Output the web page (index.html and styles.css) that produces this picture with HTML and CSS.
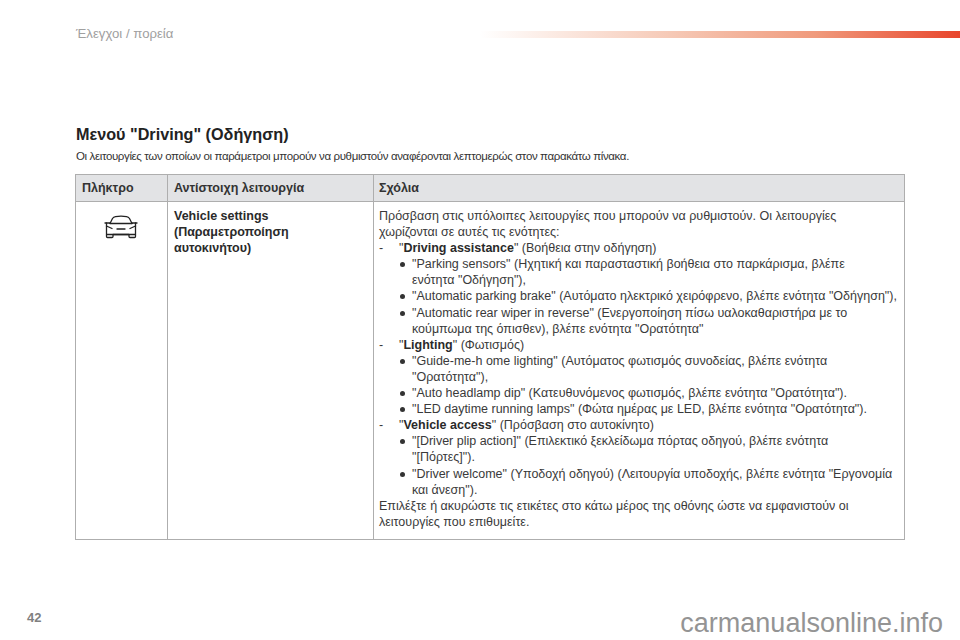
FILE: index.html
```html
<!DOCTYPE html>
<html lang="el">
<head>
<meta charset="utf-8">
<title>Μενού Driving</title>
<link rel="stylesheet" href="styles.css">
</head>
<body>
<div class="page">
  <header class="top">
    <span class="crumb">Έλεγχοι / πορεία</span>
    <span class="bar"></span>
  </header>
  <main class="content">
    <h1 class="title">Μενού "Driving" (Οδήγηση)</h1>
    <p class="intro">Οι λειτουργίες των οποίων οι παράμετροι μπορούν να ρυθμιστούν αναφέρονται λεπτομερώς στον παρακάτω πίνακα.</p>
    <table class="tbl">
      <thead>
        <tr><th class="c1">Πλήκτρο</th><th class="c2">Αντίστοιχη λειτουργία</th><th class="c3">Σχόλια</th></tr>
      </thead>
      <tbody>
        <tr>
          <td class="icon-cell">
            <svg class="car" width="34" height="24" viewBox="0 0 34 24" fill="none" stroke="#222" stroke-width="1.3" stroke-linejoin="round" stroke-linecap="round">
              <path d="M6 8.500 8.500 3.500Q9.500 2 11.500 1.600 17 .8 22.500 1.600Q24.500 2 25.500 3.500L28 8.500"/>
              <path d="M1 8H6.500M27.500 8H33"/>
              <path d="M2.500 8V21.500Q2.500 22.500 3.500 22.500H8Q9 22.500 9 21.500V19.500H25V21.500Q25 22.500 26 22.500H30.500Q31.500 22.500 31.500 21.500V8"/>
              <path d="M2.500 11 8 13.500M31.500 11 26 13.500M6 8.500H28M13 14H21M3 19.500H31"/>
            </svg>
          </td>
          <td class="func"><b>Vehicle settings<br>(Παραμετροποίηση<br>αυτοκινήτου)</b></td>
          <td class="notes">
            <p>Πρόσβαση στις υπόλοιπες λειτουργίες που μπορούν να ρυθμιστούν. Οι λειτουργίες<br>χωρίζονται σε αυτές τις ενότητες:</p>
            <ul class="groups">
              <li>"<b>Driving assistance</b>" (Βοήθεια στην οδήγηση)
                <ul class="items">
                  <li>"Parking sensors" (Ηχητική και παρασταστική βοήθεια στο παρκάρισμα, βλέπε<br>ενότητα "Οδήγηση"),</li>
                  <li>"Automatic parking brake" (Αυτόματο ηλεκτρικό χειρόφρενο, βλέπε ενότητα "Οδήγηση"),</li>
                  <li>"Automatic rear wiper in reverse" (Ενεργοποίηση πίσω υαλοκαθαριστήρα με το<br>κούμπωμα της όπισθεν), βλέπε ενότητα "Ορατότητα"</li>
                </ul>
              </li>
              <li>"<b>Lighting</b>" (Φωτισμός)
                <ul class="items">
                  <li>"Guide-me-h ome lighting" (Αυτόματος φωτισμός συνοδείας, βλέπε ενότητα<br>"Ορατότητα"),</li>
                  <li>"Auto headlamp dip" (Κατευθυνόμενος φωτισμός, βλέπε ενότητα "Ορατότητα").</li>
                  <li>"LED daytime running lamps" (Φώτα ημέρας με LED, βλέπε ενότητα "Ορατότητα").</li>
                </ul>
              </li>
              <li>"<b>Vehicle access</b>" (Πρόσβαση στο αυτοκίνητο)
                <ul class="items">
                  <li>"[Driver plip action]" (Επιλεκτικό ξεκλείδωμα πόρτας οδηγού, βλέπε ενότητα<br>"[Πόρτες]").</li>
                  <li>"Driver welcome" (Υποδοχή οδηγού) (Λειτουργία υποδοχής, βλέπε ενότητα "Εργονομία<br>και άνεση").</li>
                </ul>
              </li>
            </ul>
            <p>Επιλέξτε ή ακυρώστε τις ετικέτες στο κάτω μέρος της οθόνης ώστε να εμφανιστούν οι<br>λειτουργίες που επιθυμείτε.</p>
          </td>
        </tr>
      </tbody>
    </table>
  </main>
  <footer class="foot"><span class="pageno">42</span></footer>
  <div class="mark">carmanualsonline.info</div>
</div>
</body>
</html>
```
FILE: styles.css
```css
* { box-sizing: border-box; }
html, body { margin: 0; padding: 0; background: #fff; }
body { font-family: "Liberation Sans", Arial, sans-serif; color: #2b2b2b; }
.page { position: relative; width: 960px; height: 640px; overflow: hidden; display: flex; flex-direction: column; }
.top { display: flex; align-items: center; height: 40px; padding: 28px 0 0 76px; }
.crumb { width: 404px; font-size: 13.200px; color: #a0a0a0; line-height: 14px; }
.bar { flex: 1; height: 7px; background: linear-gradient(to right, #fff, #f6c9b6 40%, #f09a7c 70%, #e8452c); }
.content { padding: 84px 56px 0 75px; flex: 1; }
.title { margin: 0 0 0 1px; font-size: 16.200px; line-height: 20px; font-weight: bold; color: #222; }
.intro { margin: 5px 0 11px 1px; font-size: 11.500px; line-height: 14px; letter-spacing: -.37px; color: #333; }
.tbl { width: 829px; border-collapse: collapse; table-layout: fixed; font-size: 12.500px; line-height: 16.100px; }
.tbl th, .tbl td { border: 1px solid #aeaeae; vertical-align: top; padding: 0 6px; text-align: left; }
.tbl th { height: 27px; background: #e2e3e5; vertical-align: middle; font-weight: bold; color: #333; }
.c1 { width: 92px; }
.c2 { width: 206px; }
.c3 { width: 531px; }
.tbl th.c3, .tbl td.notes { padding-left: 5px; padding-right: 2px; }
.tbl td { padding-top: 6px; padding-bottom: 9px; color: #3a3a3a; }
.tbl b { color: #2a2a2a; }
.icon-cell { text-align: center !important; }
.car { display: block; margin: 7px auto 0; position: relative; left: -1px; }
.notes p { margin: 0; }
.groups { list-style: none; margin: 0; padding: 0; }
.groups > li { position: relative; padding-left: 20px; }
.groups > li::before { content: "-"; position: absolute; left: 0; top: 0; }
.items { list-style: none; margin: 0; padding: 0; }
.items li { position: relative; padding-left: 13px; }
.items li::before { content: ""; position: absolute; left: 1px; top: 6px; width: 5px; height: 5px; border-radius: 50%; background: #333; }
.foot { height: 26px; padding: 0 0 0 27px; margin-bottom: 3px; }
.pageno { font-size: 13px; font-weight: bold; color: #808080; line-height: 14px; display: block; }
.mark { position: absolute; right: 17px; bottom: 3px; font-size: 27px; line-height: 28px; color: #949494; }
```
